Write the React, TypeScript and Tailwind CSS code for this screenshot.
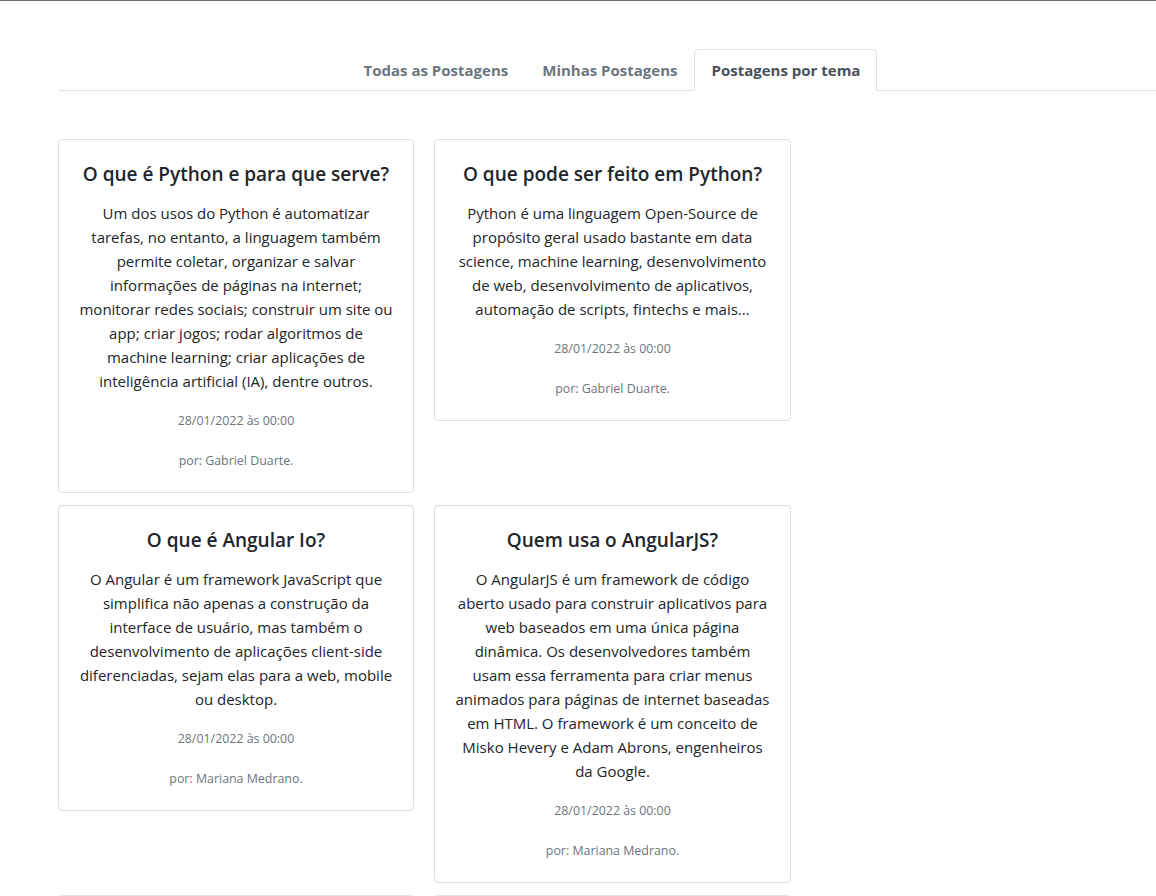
import React from 'react';

interface Post {
    title: string;
    lines: string[];
    date: string;
    author: string;
}

const posts: Post[] = [
    {
        title: 'O que é Python e para que serve?',
        lines: [
            'Um dos usos do Python é automatizar',
            'tarefas, no entanto, a linguagem também',
            'permite coletar, organizar e salvar',
            'informações de páginas na internet;',
            'monitorar redes sociais; construir um site ou',
            'app; criar jogos; rodar algoritmos de',
            'machine learning; criar aplicações de',
            'inteligência artificial (IA), dentre outros.',
        ],
        date: '28/01/2022 às 00:00',
        author: 'Gabriel Duarte',
    },
    {
        title: 'O que pode ser feito em Python?',
        lines: [
            'Python é uma linguagem Open-Source de',
            'propósito geral usado bastante em data',
            'science, machine learning, desenvolvimento',
            'de web, desenvolvimento de aplicativos,',
            'automação de scripts, fintechs e mais...',
        ],
        date: '28/01/2022 às 00:00',
        author: 'Gabriel Duarte',
    },
    {
        title: 'O que é Angular Io?',
        lines: [
            'O Angular é um framework JavaScript que',
            'simplifica não apenas a construção da',
            'interface de usuário, mas também o',
            'desenvolvimento de aplicações client-side',
            'diferenciadas, sejam elas para a web, mobile',
            'ou desktop.',
        ],
        date: '28/01/2022 às 00:00',
        author: 'Mariana Medrano',
    },
    {
        title: 'Quem usa o AngularJS?',
        lines: [
            'O AngularJS é um framework de código',
            'aberto usado para construir aplicativos para',
            'web baseados em uma única página',
            'dinâmica. Os desenvolvedores também',
            'usam essa ferramenta para criar menus',
            'animados para páginas de internet baseadas',
            'em HTML. O framework é um conceito de',
            'Misko Hevery e Adam Abrons, engenheiros',
            'da Google.',
        ],
        date: '28/01/2022 às 00:00',
        author: 'Mariana Medrano',
    },
];

const PostCard = ({post}: {post: Post}) => (
    <div className="border border-[#dfdfdf] rounded-[4px] bg-white px-5 pt-[22px] pb-[19px] text-center">
        <h5 className="text-[19px] leading-6 font-semibold text-[#212529] mb-[15px] whitespace-nowrap">{post.title}</h5>
        <p className="text-[15px] leading-6 text-[#212529] mb-4">
            {post.lines.map((line, i) => (
                <span key={i} className="block whitespace-nowrap">{line}</span>
            ))}
        </p>
        <p className="text-[12.4px] leading-6 text-[#6c757d] mb-4">{post.date}</p>
        <p className="text-[12.4px] leading-6 text-[#6c757d]">por: {post.author}.</p>
    </div>
);

const tabs = ['Todas as Postagens', 'Minhas Postagens', 'Postagens por tema'];

export default function App() {
    const active = 2;

    return (
        <div className="min-h-screen overflow-hidden bg-white border-t border-[#6b6b6b] font-['Open_Sans',sans-serif]">
            <div className="pl-[58px] pt-[48px]">
                <ul className="w-[1108px] flex justify-center border-b border-[#dee2e6]">
                    {tabs.map((tab, i) => (
                        <li key={tab} className="-mb-px">
                            <a
                                className={
                                    'block px-4 py-2 leading-6 text-[15px] font-bold border rounded-t-[4px] cursor-pointer' +
                                    (i === active
                                        ? ' text-[#495057] bg-white border-[#dee2e6] border-b-white'
                                        : ' text-[#6c757d] border-transparent')
                                }
                            >
                                {tab}
                            </a>
                        </li>
                    ))}
                </ul>

                <div className="mt-12 grid grid-cols-[356px_357px] gap-x-[20px] gap-y-[12px] items-start">
                    {posts.map((post) => (
                        <PostCard key={post.title} post={post} />
                    ))}
                    {/* next row of cards, only its top edge is in view */}
                    <div className="h-[300px] border border-[#dfdfdf] rounded-[4px] bg-white" />
                    <div className="h-[300px] border border-[#dfdfdf] rounded-[4px] bg-white" />
                </div>
            </div>
        </div>
    );
}
